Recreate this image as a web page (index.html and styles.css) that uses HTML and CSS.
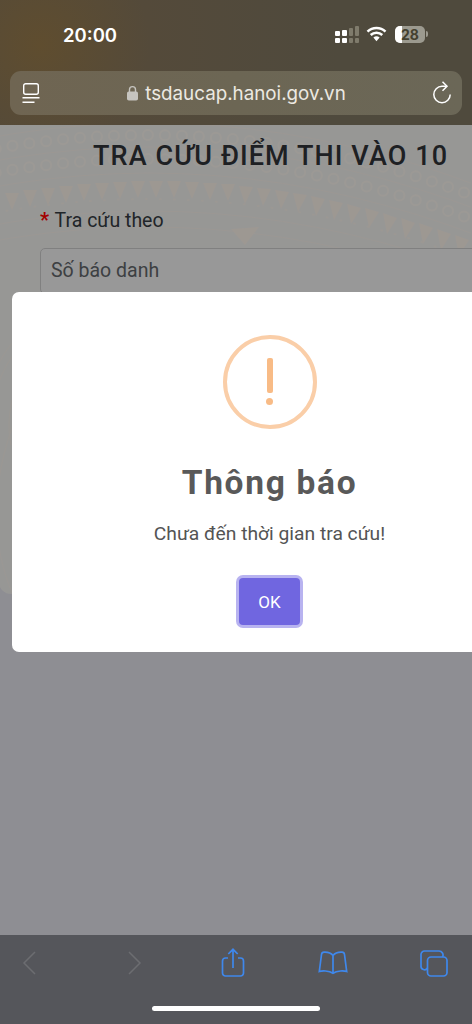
FILE: index.html
```html
<!DOCTYPE html>
<html lang="vi">
<head>
<meta charset="utf-8">
<title>Tra cứu điểm thi vào 10</title>
<link rel="stylesheet" href="styles.css">
</head>
<body>
<div class="phone">
  <header class="chrome">
    <div class="status">
      <span class="time">20:00</span>
      <div class="status-icons">
        <svg class="signal" width="24" height="17" viewBox="0 0 24 17">
          <g fill="#fff"><rect x="0" y="5" width="5" height="5" rx="1"/><rect x="7" y="4" width="5" height="6" rx="1"/><rect x="0" y="12" width="5" height="5" rx="1"/><rect x="7" y="12" width="5" height="5" rx="1"/></g>
          <g fill="#7f7b6c"><rect x="14" y="2" width="4" height="8" rx="1"/><rect x="20" y="0" width="4" height="10" rx="1"/><rect x="14" y="12" width="4" height="5" rx="1"/><rect x="20" y="12" width="4" height="5" rx="1"/></g>
        </svg>
        <svg class="wifi" width="21" height="16" viewBox="0 0 21 16">
          <path d="M1.500 5.600a13 13 0 0 1 18 0M4.700 9a8.500 8.500 0 0 1 11.600 0" fill="none" stroke="#fff" stroke-width="2.500"/>
          <path d="M7.400 11.600a4.500 4.500 0 0 1 6.200 0l-3.100 3.600z" fill="#fff"/>
        </svg>
        <div class="battery">
          <div class="battery-body"><span class="battery-fill"></span><span class="battery-num">28</span></div>
          <span class="battery-cap"></span>
        </div>
      </div>
    </div>
    <div class="urlbar">
      <svg class="reader" width="20" height="22" viewBox="0 0 20 22" fill="none" stroke="#fff" stroke-width="1.400">
        <rect x="2.700" y="1.700" width="14.600" height="10.600" rx="2"/>
        <path d="M1.500 15.800h17M1.500 20.200h12"/>
      </svg>
      <div class="address">
        <svg width="11" height="16" viewBox="0 0 11 16"><path d="M2.500 7V4.600a3 3 0 0 1 6 0V7" fill="none" stroke="#c6c4bf" stroke-width="1.400"/><rect x="0" y="6.500" width="11" height="9" rx="1.800" fill="#c6c4bf"/></svg>
        <span>tsdaucap.hanoi.gov.vn</span>
      </div>
      <svg class="reload" width="20" height="24" viewBox="0 0 20 24" fill="none" stroke="#fff" stroke-width="1.500">
        <path d="M18.200 13.500A8.200 8.200 0 1 1 10 5.300H14.500"/>
        <path d="M10.500 0.800L15 5.300L10.500 9.800"/>
      </svg>
    </div>
  </header>

  <main class="page">
    <div class="form-card">
      <svg class="pattern" width="472" height="470" viewBox="0 0 472 470" fill="none">
        <g class="rings">
          <path class="ring-o" d="M-20 26.800Q250 -26.400 520 89.400"/>
          <path class="ring-i" d="M-20 26.800Q250 -26.400 520 89.400"/>
          <path class="ring-o" d="M-20 50.800Q250 -2.400 520 113.400"/>
          <path class="ring-i" d="M-20 50.800Q250 -2.400 520 113.400"/>
        </g>
        <g class="lines">
          <path d="M-20 14.800Q250 -38.400 520 77.400"/>
          <path d="M-20 38.800Q250 -14.400 520 101.400"/>
          <path d="M-20 64.800Q250 11.600 520 127.400"/>
          <path d="M-20 102.800Q250 49.600 520 165.400"/>
          <path d="M-20 118.800Q250 65.600 520 181.400"/>
          <path d="M0 330C-24 250 30 196 84 190"/>
          <path d="M-10 350C-34 240 30 182 90 176"/>
          <path d="M12 320C0 260 44 212 90 206"/>
          <path d="M14 470C-8 420 -8 360 14 300"/>
        </g>
        <path class="dots" d="M-20 90.800Q250 37.600 520 153.400"/>
        <path class="tri" d="M6 68l14 0-7 17zM24 65l14 0-7 17zM42 63l14 0-7 17zM60 61l14 0-7 17zM78 59l14 0-7 17zM96 58l14 0-7 17zM114 57l14 0-7 17zM132 56l14 0-7 17zM150 56l14 0-7 17zM168 56l14 0-7 17zM186 57l14 0-7 17zM204 58l14 0-7 17zM222 59l14 0-7 17zM240 61l14 1-8 17zM258 63l14 1-8 17zM276 65l14 2-8 17zM294 68l14 2-9 17zM312 71l14 3-9 17zM330 75l14 3-9 17zM348 79l14 4-10 16zM366 83l14 4-10 16zM384 88l14 5-10 16zM402 93l14 5-10 16zM420 98l14 5-10 16zM438 104l14 5-10 16zM456 110l14 5-10 16z"/>
        <path class="tri" d="M232 104l28-2-14 18z"/>
      </svg>
      <h1 class="title">TRA CỨU ĐIỂM THI VÀO 10</h1>
      <label class="field-label"><span class="req">*</span> Tra cứu theo</label>
      <div class="select">Số báo danh</div>
    </div>
    <div class="overlay"></div>
    <div class="modal">
      <div class="alert-icon"><span class="alert-bar"></span><span class="alert-dot"></span></div>
      <h2 class="modal-title">Thông báo</h2>
      <p class="modal-text">Chưa đến thời gian tra cứu!</p>
      <button class="ok">OK</button>
    </div>
  </main>

  <footer class="toolbar">
    <div class="tools">
      <span class="tool"><svg width="18" height="26" viewBox="0 0 18 26" fill="none" stroke="#6c6d71" stroke-width="1.500"><path d="M14 2L3 13l11 11"/></svg></span>
      <span class="tool tool-next"><svg width="18" height="26" viewBox="0 0 18 26" fill="none" stroke="#6c6d71" stroke-width="1.500"><path d="M4 2l11 11L4 24"/></svg></span>
      <span class="tool tool-share"><svg width="24" height="30" viewBox="0 0 24 30" fill="none" stroke="#3f88ec" stroke-width="1.700"><path d="M7 10H4.500A3 3 0 0 0 1.500 13v12a3 3 0 0 0 3 3h15a3 3 0 0 0 3-3V13a3 3 0 0 0-3-3H17"/><path d="M12 20V1.500M7.300 6L12 1.300 16.700 6"/></svg></span>
      <span class="tool"><svg width="30" height="24" viewBox="0 0 30 24" fill="none" stroke="#3f88ec" stroke-width="1.700"><path d="M15 4.500C13 2 9.500 1 6 1.200 4.300 1.300 3.700 2 3.500 3.500L1.300 20.500c2.500-.8 9.500-1.200 13.700 1.800 4.200-3 11.200-2.600 13.700-1.800L26.500 3.500C26.300 2 25.700 1.300 24 1.200 20.500 1 17 2 15 4.500zM15 4.500v17.500"/></svg></span>
      <span class="tool tool-tabs"><svg width="28" height="27" viewBox="0 0 28 27" fill="none" stroke="#3f88ec" stroke-width="1.700"><path d="M22.500 7a4 4 0 0 0-3.600-6H4.500A3.500 3.500 0 0 0 1 4.500v11.400A3.500 3.500 0 0 0 7.500 18"/><rect x="7.500" y="7" width="19.500" height="19" rx="3.500"/></svg></span>
    </div>
    <div class="home"></div>
  </footer>
</div>
</body>
</html>
```
FILE: styles.css
```css
* { box-sizing: border-box; }
html, body { margin: 0; padding: 0; }
body { width: 472px; height: 1024px; overflow: hidden; font-family: Roboto, "Liberation Sans", sans-serif; }
.phone { width: 472px; height: 1024px; display: flex; flex-direction: column; overflow: hidden; }

.chrome {
  height: 125px; flex: none;
  background: radial-gradient(circle at 40px 45px, #5f4d2f 0, #544a3a 110px, #4f4a3d 300px);
  padding: 0 10px;
}
.status { height: 71px; display: flex; align-items: center; justify-content: space-between; padding: 0 34px 3px 53px; }
.time { font-family: Inter, sans-serif; font-weight: 600; font-size: 18.500px; color: #fff; margin-top: 1px; }
.status-icons { display: flex; align-items: center; gap: 7px; }
.wifi { margin-right: 1px; }
.battery { display: flex; align-items: center; gap: 1px; }
.battery-body { position: relative; width: 30px; height: 17px; border-radius: 5px; background: #9c9a8f; overflow: hidden; display: flex; align-items: center; justify-content: center; }
.battery-fill { position: absolute; left: 0; top: 0; bottom: 0; width: 7px; background: #fff; }
.battery-num { position: relative; font-family: Inter, sans-serif; font-size: 14px; font-weight: 700; color: #45412f; }
.battery-cap { width: 2px; height: 6px; border-radius: 0 2px 2px 0; background: #9c9a8f; }

.urlbar {
  height: 44px; border-radius: 11px;
  background: linear-gradient(90deg, #6f6552, #6c6654 50%, #6b6757);
  display: flex; align-items: center; justify-content: space-between; padding: 0 10px 0 11px;
}
.address { display: flex; align-items: center; gap: 7px; font-family: Inter, sans-serif; font-size: 18.800px; color: #ece9e2; }
.reader, .reload { flex: none; }

.page { position: relative; flex: 1; background: #dedee6; overflow: hidden; }
.form-card { position: relative; width: 530px; height: 469px; margin-left: -1px; border-radius: 0 0 0 12px; background: #edecea; padding: 14px 0 0 41px; overflow: hidden; }
.pattern { position: absolute; left: 0; top: 0; opacity: .5; }
.ring-o { fill: none; stroke: #fbf3ea; stroke-width: 12; stroke-dasharray: 0 17; stroke-linecap: round; }
.ring-i { fill: none; stroke: #edecea; stroke-width: 8; stroke-dasharray: 0 17; stroke-linecap: round; }
.lines path { stroke: #f8efe4; stroke-width: 1; }
.dots { fill: none; stroke: #f8efe4; stroke-width: 2; stroke-dasharray: 1 13; stroke-linecap: round; }
.tri { fill: #ffefe0; }
.title { position: relative; margin: 0 0 0 53px; font-size: 27px; line-height: 34px; font-weight: 500; letter-spacing: 1.100px; color: #2f3237; white-space: nowrap; }
.field-label { position: relative; display: block; margin-top: 36px; font-size: 19.500px; line-height: 24px; color: #343a40; }
.req { color: #ff0000; font-weight: 700; font-size: 20px; line-height: 18px; margin-right: 1px; }
.select { position: relative; margin-top: 15px; width: 600px; height: 46px; padding: 10px; border: 1px solid #c8c8c8; border-radius: 5px; background: #eeeeee; font-size: 19.500px; line-height: 24px; color: #606468; }

.overlay { position: absolute; inset: 0; background: rgba(0, 0, 0, .36); }

.modal {
  position: absolute; left: 12px; top: 167px; width: 515px; height: 360px;
  border-radius: 7px; background: #fff;
  display: flex; flex-direction: column; align-items: center; padding-top: 43px;
}
.alert-icon { position: relative; width: 94px; height: 94px; border-radius: 50%; border: 4px solid #facea8; flex: none; display: flex; flex-direction: column; align-items: center; padding-top: 19px; }
.alert-bar { width: 6px; height: 35px; border-radius: 2px; background: #f8bb86; }
.alert-dot { width: 7px; height: 7px; border-radius: 50%; background: #f8bb86; margin-top: 5px; }
.modal-title { margin: 35px 0 0; font-size: 33.500px; line-height: 38px; font-weight: 700; letter-spacing: 1.700px; color: #595959; }
.modal-text { margin: 19px 0 0; font-size: 19.250px; line-height: 26px; color: #545454; }
.ok { margin-top: 31px; width: 61px; height: 47px; padding: 0; border: 0; border-radius: 4px; background: #7066e0; box-shadow: 0 0 0 3px #b8b3f0; color: #fff; font-family: Roboto, sans-serif; font-size: 17px; }

.toolbar { height: 89px; flex: none; background: #55565b; display: flex; flex-direction: column; }
.tools { height: 68px; display: flex; align-items: center; padding: 2px 0 14px 15px; }
.tool { width: 30px; display: flex; justify-content: center; margin-left: 70px; }
.tool:first-child { margin-left: 0; }
.tool-next { margin-left: 74px; }
.tool-share { margin-left: 69px; }
.tool-tabs { margin-left: 71px; }
.home { width: 168px; height: 5px; border-radius: 3px; background: #fff; margin: 3px auto 0; }
```
